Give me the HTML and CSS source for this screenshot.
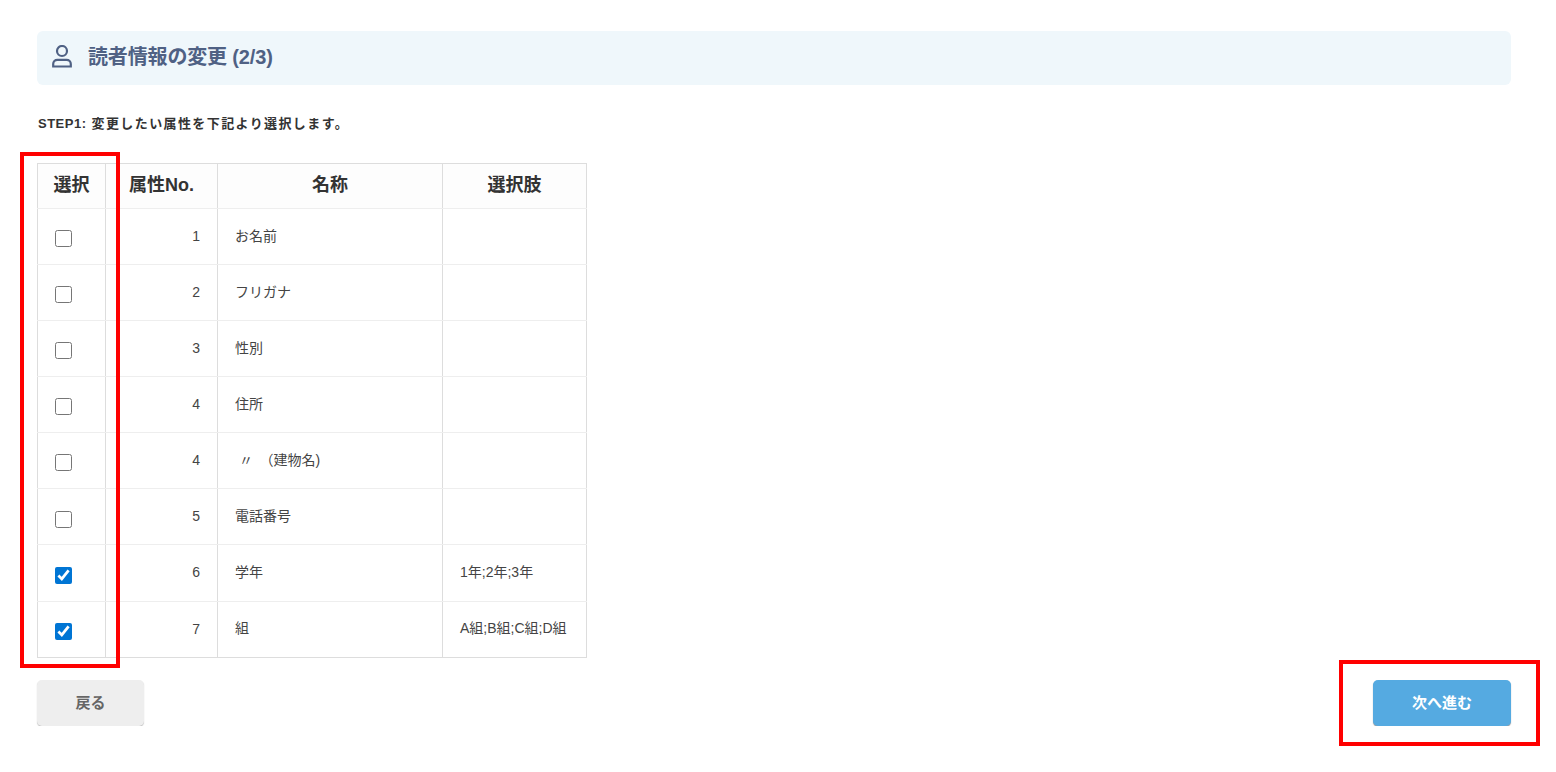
FILE: index.html
```html
<!DOCTYPE html>
<html lang="ja">
<head>
  <meta charset="UTF-8">
  <title>読者情報の変更</title>
  <link rel="stylesheet" href="styles.css">
</head>
<body>
  <div class="page">
    <div class="page-title">
      <svg class="title-icon" width="24" height="24" viewBox="0 0 24 24" fill="none" stroke="#4f6184" stroke-width="2.200">
        <circle cx="12" cy="6" r="5"/>
        <path d="M3.200 21.500v-2.500c0-2.500 1.800-4.200 4.200-4.200h9.200c2.400 0 4.200 1.700 4.200 4.200v2.500z"/>
      </svg>
      <h1>読者情報の変更 (2/3)</h1>
    </div>
    <p class="step"><span class="step-no">STEP1:</span> 変更したい属性を下記より選択します。</p>
    <table class="attr-table">
      <thead>
        <tr>
          <th class="col-check">選択</th>
          <th class="col-no">属性No.</th>
          <th class="col-name">名称</th>
          <th class="col-choice">選択肢</th>
        </tr>
      </thead>
      <tbody>
        <tr><td class="cell-check"><input type="checkbox"></td><td class="cell-no">1</td><td>お名前</td><td></td></tr>
        <tr><td class="cell-check"><input type="checkbox"></td><td class="cell-no">2</td><td>フリガナ</td><td></td></tr>
        <tr><td class="cell-check"><input type="checkbox"></td><td class="cell-no">3</td><td>性別</td><td></td></tr>
        <tr><td class="cell-check"><input type="checkbox"></td><td class="cell-no">4</td><td>住所</td><td></td></tr>
        <tr><td class="cell-check"><input type="checkbox"></td><td class="cell-no">4</td><td>&nbsp;〃&thinsp; （建物名)</td><td></td></tr>
        <tr class="row-low"><td class="cell-check"><input type="checkbox"></td><td class="cell-no">5</td><td>電話番号</td><td></td></tr>
        <tr class="row-tall row-low"><td class="cell-check"><input type="checkbox" checked></td><td class="cell-no">6</td><td>学年</td><td>1年;2年;3年</td></tr>
        <tr class="row-last"><td class="cell-check"><input type="checkbox" checked></td><td class="cell-no">7</td><td class="cell-text">組</td><td class="cell-text">A組;B組;C組;D組</td></tr>
      </tbody>
    </table>
    <div class="actions">
      <button class="btn btn-back">戻る</button>
      <button class="btn btn-next">次へ進む</button>
    </div>
  </div>
  <div class="mark mark-column"></div>
  <div class="mark mark-next"></div>
</body>
</html>
```

FILE: styles.css
```css
* {
  box-sizing: border-box;
}
body {
  margin: 0;
  background: #fff;
  color: #444;
  font-family: "Liberation Sans", "Noto Sans CJK JP", sans-serif;
}
.page {
  padding: 31px 45px 0 37px;
}
.page-title {
  display: flex;
  align-items: center;
  gap: 14px;
  height: 54px;
  padding-left: 13px;
  background: #eff7fb;
  border-radius: 6px;
}
.title-icon {
  flex: none;
  margin-top: -2px;
}
.page-title h1 {
  margin: 0 0 6px;
  font-size: 20px;
  font-weight: 700;
  letter-spacing: -0.15px;
  color: #4f6184;
}
.step {
  margin: 31px 0 0 1px;
  font-size: 13px;
  line-height: 16px;
  font-weight: 700;
  letter-spacing: 1.4px;
  color: #333;
}
.step-no {
  letter-spacing: 0.5px;
}
.attr-table {
  margin-top: 31px;
  border-collapse: collapse;
  table-layout: fixed;
  width: 550px;
  font-size: 14px;
}
.attr-table th,
.attr-table td {
  border: 1px solid #ddd;
}
.attr-table th {
  height: 45px;
  padding: 0 0 6px;
  font-size: 18px;
  font-weight: 700;
  color: #333;
  background: #fdfdfd;
}
.attr-table thead th {
  border-bottom-color: #eee;
}
.attr-table tbody td {
  height: 56px;
  padding: 0 17px 4px 17px;
  border-top-color: #eee;
  border-bottom-color: #eee;
  border-left-color: #ddd;
  border-right-color: #ddd;
}
.attr-table tbody .row-tall td {
  height: 57px;
}
.attr-table tbody .row-last td {
  border-bottom-color: #ddd;
}
.attr-table tbody .row-last .cell-text {
  padding-bottom: 6px;
}
.col-check {
  width: 68px;
}
.col-no {
  width: 112px;
}
.col-name {
  width: 225px;
}
.attr-table tbody .cell-check {
  padding: 3px 0 0 17px;
}
.cell-check input {
  display: block;
  width: 17px;
  height: 17px;
  margin: 0;
  accent-color: #0075d4;
}
.row-low .cell-check input {
  margin-top: 2px;
}
.attr-table tbody .cell-no {
  padding-bottom: 2px;
  text-align: right;
}
.actions {
  display: flex;
  justify-content: space-between;
  margin-top: 22px;
}
.btn {
  height: 46px;
  padding: 0 0 4px;
  border: none;
  border-radius: 5px;
  font-family: inherit;
  font-size: 15px;
  font-weight: 700;
}
.btn-back {
  width: 107px;
  background: #eee;
  color: #666;
  box-shadow: 0 1px 1px rgba(0, 0, 0, 0.25);
}
.btn-next {
  width: 138px;
  background: #55aae1;
  color: #fff;
  box-shadow: 0 1px 1px rgba(0, 0, 0, 0.4);
}
/* red annotation frames laid over the page */
.mark {
  position: absolute;
  border: 4px solid #f00;
}
.mark-column {
  left: 20px;
  top: 152px;
  width: 100px;
  height: 516px;
}
.mark-next {
  left: 1339px;
  top: 660px;
  width: 201px;
  height: 86px;
}
```
